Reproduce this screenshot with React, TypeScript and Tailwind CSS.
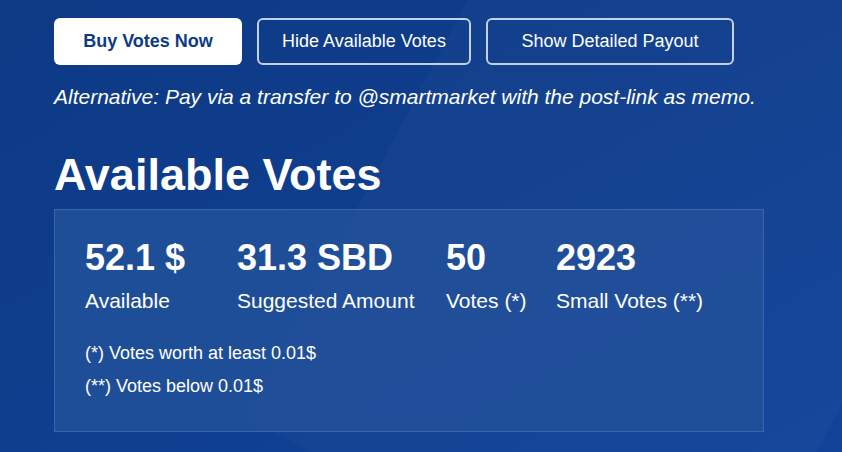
const stats = [
  { value: '52.1 $', label: 'Available', w: 'w-[152px]' },
  { value: '31.3 SBD', label: 'Suggested Amount', w: 'w-[209px]' },
  { value: '50', label: 'Votes (*)', w: 'w-[110px]' },
  { value: '2923', label: 'Small Votes (**)', w: '' },
];

const App = () => {
  return (
    <div className="relative h-[452px] w-[842px] overflow-hidden bg-gradient-to-br from-[#0d3a85] via-[#0f3e8e] to-[#114399] font-['Liberation_Sans',Arial,sans-serif] text-white">
      {/* soft diagonal light shapes in the background */}
      <div className="pointer-events-none absolute top-[-120px] left-[380px] h-[700px] w-[520px] rotate-[28deg] bg-white/[0.025]" />

      <div className="relative px-[54px] pt-[18px]">
        <div className="flex gap-[15px]">
          <button className="h-[47px] w-[188px] rounded-md bg-white text-[18px] font-bold text-[#0e3a84]">Buy Votes Now</button>
          <button className="h-[47px] w-[214px] rounded-md border-2 border-[#c3d1ea] text-[18px]">Hide Available Votes</button>
          <button className="h-[47px] w-[248px] rounded-md border-2 border-[#c3d1ea] text-[18px]">Show Detailed Payout</button>
        </div>

        <p className="mt-[19px] text-[21px] leading-[26px] italic">Alternative: Pay via a transfer to @smartmarket with the post-link as memo.</p>

        <h2 className="mt-[40px] text-[45px] leading-[50px] font-bold">Available Votes</h2>

        <div className="mt-[9px] h-[223px] w-[710px] border border-[#3b65aa] bg-[#21509a]/90 px-[30px] pt-[26px]">
          <div className="flex">
            {stats.map((s) => (
              <div key={s.label} className={s.w}>
                <div className="text-[36px] leading-[44px] font-bold">{s.value}</div>
                <div className="mt-[9px] text-[21px] leading-[24px]">{s.label}</div>
              </div>
            ))}
          </div>
          <div className="mt-[24px] text-[18px] leading-[33px]">
            <div>(*) Votes worth at least 0.01$</div>
            <div>(**) Votes below 0.01$</div>
          </div>
        </div>
      </div>
    </div>
  );
};

export default App;
